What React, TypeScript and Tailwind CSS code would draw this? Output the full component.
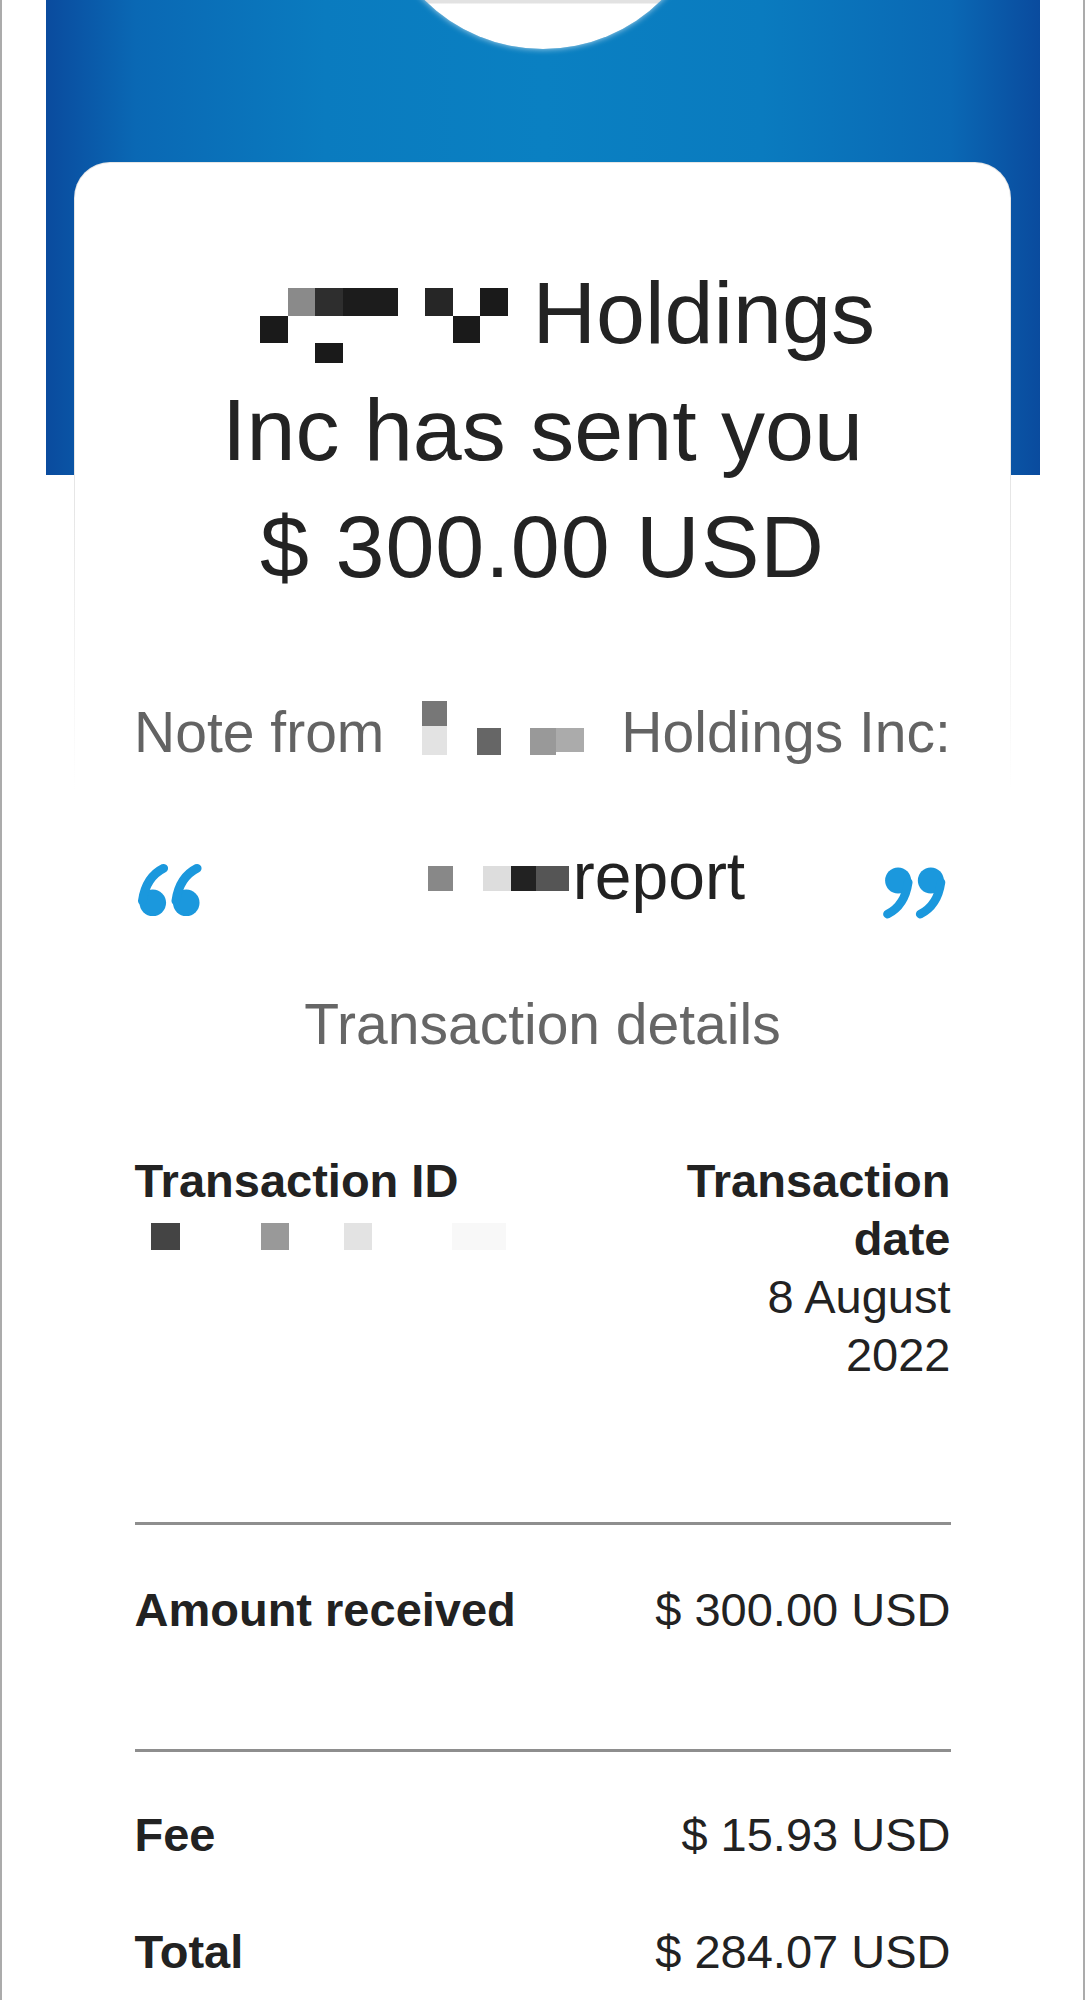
function QuoteMark({ className }: { className?: string }) {
	return (
		<svg viewBox="0 0 66 54" className={className} fill="#1b98dd">
			<circle cx="15" cy="40" r="13.5" />
			<path d="M26 5 Q8 14 4.5 38" stroke="#1b98dd" strokeWidth="9" strokeLinecap="round" fill="none" />
			<circle cx="49" cy="40" r="13.5" />
			<path d="M60 5 Q42 14 38.5 38" stroke="#1b98dd" strokeWidth="9" strokeLinecap="round" fill="none" />
		</svg>
	);
}

function Block({ className }: { className: string }) {
	return <span className={`block ${className}`} />;
}

function App() {
	return (
		<div className="min-h-[2000px] w-full border-x-2 border-[#ababab] bg-white font-['Liberation_Sans',Arial,sans-serif]">
			<header className="mx-auto h-[475px] w-[994px] overflow-hidden bg-[linear-gradient(to_right,#0a4b9e_0%,#0a68b4_9%,#0a7bbf_28%,#0a80c2_50%,#0a7bbf_72%,#0a68b4_91%,#0a4b9e_100%)]">
				<div className="mx-auto -mt-[287px] size-[336px] rounded-full bg-[linear-gradient(to_bottom,#e2e2e2_290px,#ffffff_291px)] shadow-[0_0_6px_rgba(255,255,255,0.7)]" />
			</header>

			<section className="relative mx-auto -mt-[313px] w-[937px] rounded-t-[36px] bg-[linear-gradient(to_bottom,#e6e6e6_55%,#ffffff_100%)] px-px pt-px">
				<div className="rounded-t-[35px] bg-white pt-[91px] pb-[23px]">
					<h1 className="text-center text-[88px] leading-[117px] font-normal text-[#232323]">
						<div className="flex items-start justify-center">
							<div className="mt-[34px] ml-[50px] grid grid-cols-[repeat(9,27.5px)] grid-rows-[27.5px_27.5px_20px]">
								<Block className="col-start-2 row-start-1 bg-[#8a8a8a]" />
								<Block className="col-start-3 row-start-1 bg-[#2e2e2e]" />
								<Block className="col-span-2 col-start-4 row-start-1 bg-[#1c1c1c]" />
								<Block className="col-start-7 row-start-1 bg-[#262626]" />
								<Block className="col-start-9 row-start-1 bg-[#1a1a1a]" />
								<Block className="col-start-1 row-start-2 bg-[#1a1a1a]" />
								<Block className="col-start-8 row-start-2 bg-[#1a1a1a]" />
								<Block className="col-start-3 row-start-3 bg-[#1a1a1a]" />
							</div>
							<span className="ml-[25px]">Holdings</span>
						</div>
						<div>Inc has sent you</div>
						<div className="tracking-[1px]">$ 300.00 USD</div>
					</h1>

					<p className="mt-[92px] flex items-start justify-center text-[57px] leading-[70px] text-[#636363]">
						<span>Note from</span>
						<span className="flex h-[70px] w-[237px] items-start">
							<span className="mt-[4px] ml-[38px] flex w-[25px] flex-col">
								<Block className="h-[25px] bg-[#777]" />
								<Block className="h-[29px] bg-[#e3e3e3]" />
							</span>
							<Block className="mt-[31px] ml-[30px] h-[27px] w-[24px] bg-[#666]" />
							<Block className="mt-[31px] ml-[29px] h-[27px] w-[26px] bg-[#999]" />
							<Block className="mt-[31px] h-[24px] w-[28px] bg-[#ababab]" />
						</span>
						<span>Holdings Inc:</span>
					</p>
				</div>
			</section>

			<div className="mx-auto mt-[46px] flex w-[810px] items-start">
				<QuoteMark className="mt-[27px] h-[54px] w-[65px] shrink-0" />
				<div className="flex flex-1 items-start justify-center text-[66px] leading-[80px] text-[#222]">
					<span className="mt-[30px] flex h-[25px] w-[237px]">
						<Block className="ml-[92px] w-[25px] bg-[#888]" />
						<Block className="ml-[30px] w-[28px] bg-[#ddd]" />
						<Block className="w-[25px] bg-[#222]" />
						<Block className="w-[33px] bg-[#555]" />
					</span>
					<span>report</span>
				</div>
				<QuoteMark className="mt-[31px] h-[52px] w-[69px] shrink-0 rotate-180" />
			</div>

			<h2 className="mt-[70px] text-center text-[57px] leading-[70px] font-normal text-[#666]">
				Transaction details
			</h2>

			<div className="mx-auto mt-[93px] w-[816px] text-[47px] leading-[58px] text-[#222]">
				<div className="flex items-start justify-between">
					<div>
						<div className="font-bold">Transaction ID</div>
						<div className="flex h-[58px] items-start">
							<Block className="mt-[13px] ml-[16px] h-[27px] w-[29px] bg-[#444]" />
							<Block className="mt-[13px] ml-[81px] h-[27px] w-[28px] bg-[#999]" />
							<Block className="mt-[13px] ml-[55px] h-[27px] w-[28px] bg-[#e3e3e3]" />
							<Block className="mt-[13px] ml-[80px] h-[27px] w-[54px] bg-[#f8f8f8]" />
						</div>
					</div>
					<div className="w-[285px] text-right">
						<div className="font-bold">Transaction date</div>
						<div>8 August 2022</div>
					</div>
				</div>

				<div className="mt-[138px] h-[3px] bg-[#8e8e8e]" />

				<div className="mt-[56px] flex justify-between">
					<span className="font-bold">Amount received</span>
					<span>$ 300.00 USD</span>
				</div>

				<div className="mt-[110px] h-[3px] bg-[#8e8e8e]" />

				<div className="mt-[54px] flex justify-between">
					<span className="font-bold">Fee</span>
					<span>$ 15.93 USD</span>
				</div>

				<div className="mt-[59px] flex justify-between">
					<span className="font-bold">Total</span>
					<span>$ 284.07 USD</span>
				</div>
			</div>
		</div>
	);
}

export default App;
